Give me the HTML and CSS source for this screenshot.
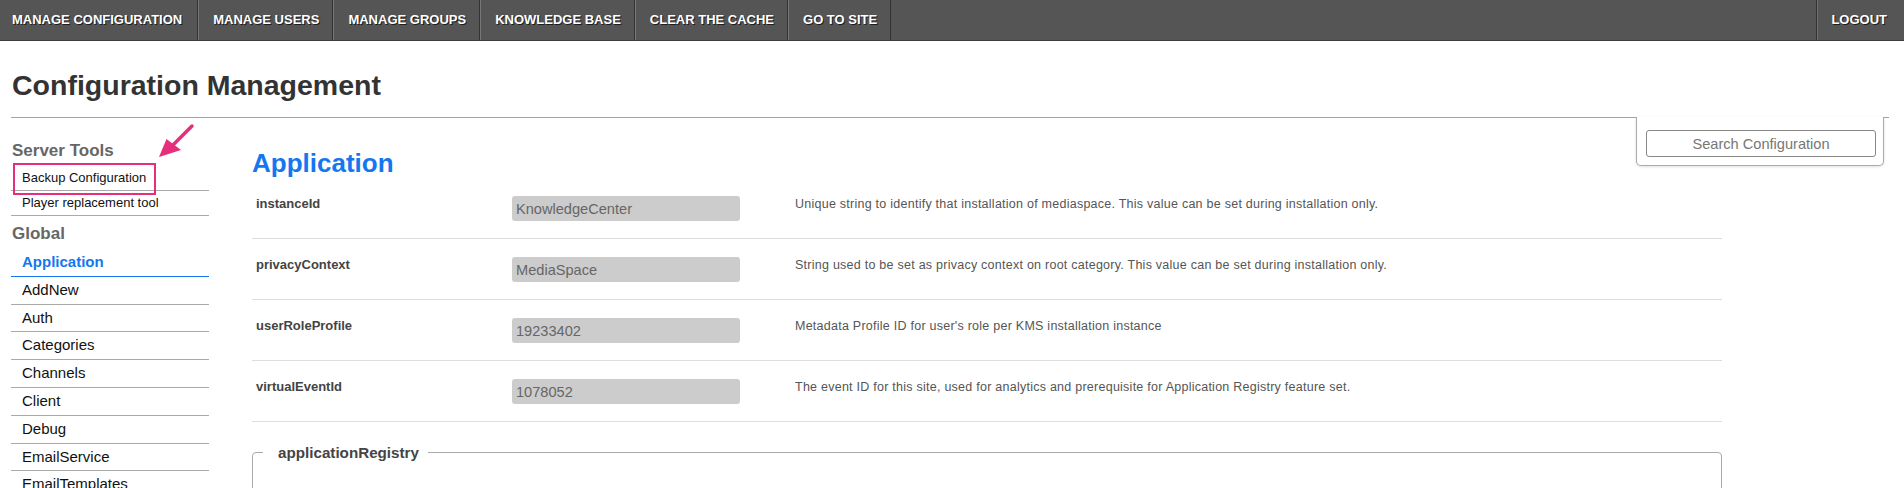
FILE: index.html
```html
<!DOCTYPE html>
<html lang="en">
<head>
<meta charset="utf-8">
<title>Configuration Management</title>
<link rel="stylesheet" href="styles.css">
</head>
<body>
<nav class="topbar">
  <a class="nav-item first">MANAGE CONFIGURATION</a>
  <a class="nav-item">MANAGE USERS</a>
  <a class="nav-item">MANAGE GROUPS</a>
  <a class="nav-item">KNOWLEDGE BASE</a>
  <a class="nav-item">CLEAR THE CACHE</a>
  <a class="nav-item">GO TO SITE</a>
  <a class="nav-item logout">LOGOUT</a>
</nav>
<div class="page">
  <h1 class="page-title">Configuration Management</h1>
  <div class="layout">
    <aside class="sidebar">
      <h3 class="side-head">Server Tools</h3>
      <ul class="tool-list">
        <li class="tool highlighted">Backup Configuration</li>
        <li class="tool">Player replacement tool</li>
      </ul>
      <svg class="arrow" width="60" height="45" viewBox="0 0 60 45" aria-hidden="true">
        <line x1="52" y1="6" x2="31" y2="27" stroke="#e62e7c" stroke-width="3.5" stroke-linecap="round"/>
        <polygon points="19,37 26.5,19 41,30" fill="#e62e7c"/>
      </svg>
      <h3 class="side-head global">Global</h3>
      <ul class="module-list">
        <li class="module active">Application</li>
        <li class="module">AddNew</li>
        <li class="module">Auth</li>
        <li class="module">Categories</li>
        <li class="module">Channels</li>
        <li class="module">Client</li>
        <li class="module">Debug</li>
        <li class="module">EmailService</li>
        <li class="module">EmailTemplates</li>
        <li class="module">Embedplaylist</li>
        <li class="module">Gallery</li>
      </ul>
    </aside>
    <main class="content">
      <h2 class="section-title">Application</h2>
      <div class="config-row">
        <div class="cfg-label">instanceId</div>
        <div class="cfg-value"><input class="cfg-input" type="text" readonly value="KnowledgeCenter"></div>
        <div class="cfg-desc">Unique string to identify that installation of mediaspace. This value can be set during installation only.</div>
      </div>
      <div class="config-row">
        <div class="cfg-label">privacyContext</div>
        <div class="cfg-value"><input class="cfg-input" type="text" readonly value="MediaSpace"></div>
        <div class="cfg-desc">String used to be set as privacy context on root category. This value can be set during installation only.</div>
      </div>
      <div class="config-row">
        <div class="cfg-label">userRoleProfile</div>
        <div class="cfg-value"><input class="cfg-input" type="text" readonly value="19233402"></div>
        <div class="cfg-desc">Metadata Profile ID for user's role per KMS installation instance</div>
      </div>
      <div class="config-row">
        <div class="cfg-label">virtualEventId</div>
        <div class="cfg-value"><input class="cfg-input" type="text" readonly value="1078052"></div>
        <div class="cfg-desc">The event ID for this site, used for analytics and prerequisite for Application Registry feature set.</div>
      </div>
      <fieldset class="group">
        <legend class="group-legend">applicationRegistry</legend>
        <div class="group-body"></div>
      </fieldset>
    </main>
  </div>
</div>
<div class="search-panel">
  <input class="search-input" type="text" placeholder="Search Configuration">
</div>
</body>
</html>
```
FILE: styles.css
```css
html, body {
  margin: 0;
  padding: 0;
  overflow: hidden;
  background: #fff;
}
body {
  font-family: "Liberation Sans", Arial, sans-serif;
  color: #222;
}

/* top navigation */
.topbar {
  display: flex;
  height: 40px;
  background: #555;
  border-bottom: 1px solid #3e3e3e;
}
.nav-item {
  display: block;
  line-height: 40px;
  padding: 0 13px 0 14px;
  font-size: 13px;
  font-weight: bold;
  color: #fff;
  text-shadow: 1px 1px 0 #1e1e1e;
  border-left: 1px solid #777;
  border-right: 1px solid #333;
  white-space: nowrap;
  cursor: pointer;
}
.nav-item.first {
  padding-left: 12px;
  padding-right: 15px;
  border-left: none;
}
.nav-item.logout {
  margin-left: auto;
  padding: 0 17px 0 14px;
  border-left: 1px solid #333;
  border-right: none;
  box-shadow: inset 1px 0 0 #6f6f6f;
}

/* page */
.page {
  padding: 0 15px 0 11px;
}
.page-title {
  margin: 28px 0 15px 1px;
  font-size: 28.5px;
  line-height: 33px;
  font-weight: bold;
  color: #333;
}
.layout {
  display: flex;
  align-items: flex-start;
  border-top: 1px solid #a3a3a3;
}

/* sidebar */
.sidebar {
  position: relative;
  width: 198px;
  flex: none;
  padding-top: 23px;
}
.side-head {
  margin: 0 0 5px 1px;
  font-size: 17px;
  line-height: 20px;
  font-weight: bold;
  color: #666;
}
.side-head.global {
  margin-top: 8px;
  margin-bottom: 5px;
}
.tool-list, .module-list {
  list-style: none;
  margin: 0;
  padding: 0;
}
.tool {
  position: relative;
  font-size: 13px;
  line-height: 24px;
  padding-left: 11px;
  color: #111;
  border-bottom: 1px solid #aaa;
}
.tool.highlighted::after {
  content: "";
  position: absolute;
  left: 2px;
  top: -3px;
  width: 139px;
  height: 28px;
  border: 2px solid #e62e7c;
}
.arrow {
  position: absolute;
  left: 129px;
  top: 2px;
}
.module {
  font-size: 15px;
  line-height: 26.8px;
  padding-left: 11px;
  color: #111;
  border-bottom: 1px solid #aaa;
}
.module.active {
  color: #1477f0;
  font-weight: bold;
  border-bottom-color: #1477f0;
}

/* main content */
.content {
  width: 1470px;
  margin-left: 43px;
}
.section-title {
  margin: 30px 0 0;
  font-size: 26px;
  line-height: 30px;
  font-weight: bold;
  color: #1477f0;
}
.config-row {
  display: grid;
  grid-template-columns: 260px 283px 1fr;
  align-items: start;
  padding: 18px 0 17px;
  border-bottom: 1px solid #ddd;
}
.cfg-label {
  padding-left: 4px;
  font-size: 13px;
  line-height: 15px;
  font-weight: bold;
  color: #444;
}
.cfg-input {
  display: block;
  box-sizing: border-box;
  width: 228px;
  height: 25px;
  margin: 0;
  padding: 0 4px;
  border: none;
  border-radius: 3px;
  background: #ccc;
  font-family: "Liberation Sans", Arial, sans-serif;
  font-size: 14.6px;
  color: #666;
  outline: none;
}
.cfg-desc {
  padding-top: 1px;
  font-size: 12.5px;
  letter-spacing: 0.25px;
  line-height: 14px;
  color: #555;
}
.group {
  margin: 22px 0 0;
  padding: 0 10px;
  border: 1px solid #aaa;
  border-radius: 4px;
  min-height: 80px;
}
.group-legend {
  padding: 0 9px 0 15px;
  font-size: 15.2px;
  line-height: 17px;
  font-weight: bold;
  color: #444;
}

/* floating search panel */
.search-panel {
  position: absolute;
  top: 117px;
  right: 20px;
  box-sizing: border-box;
  width: 248px;
  height: 49px;
  padding: 13px 0 0 9px;
  background: #fff;
  border: 1px solid #aaa;
  border-top: none;
  border-radius: 0 0 5px 5px;
  box-shadow: 0 1px 3px rgba(0, 0, 0, 0.12);
}
.search-input {
  display: block;
  box-sizing: border-box;
  width: 230px;
  height: 27px;
  margin: 0;
  padding: 0 6px;
  border: 1px solid #888;
  border-radius: 3px;
  background: #fff;
  font-family: "Liberation Sans", Arial, sans-serif;
  font-size: 14.6px;
  text-align: center;
  color: #555;
  outline: none;
}
.search-input::placeholder {
  color: #777;
  opacity: 1;
}
```
